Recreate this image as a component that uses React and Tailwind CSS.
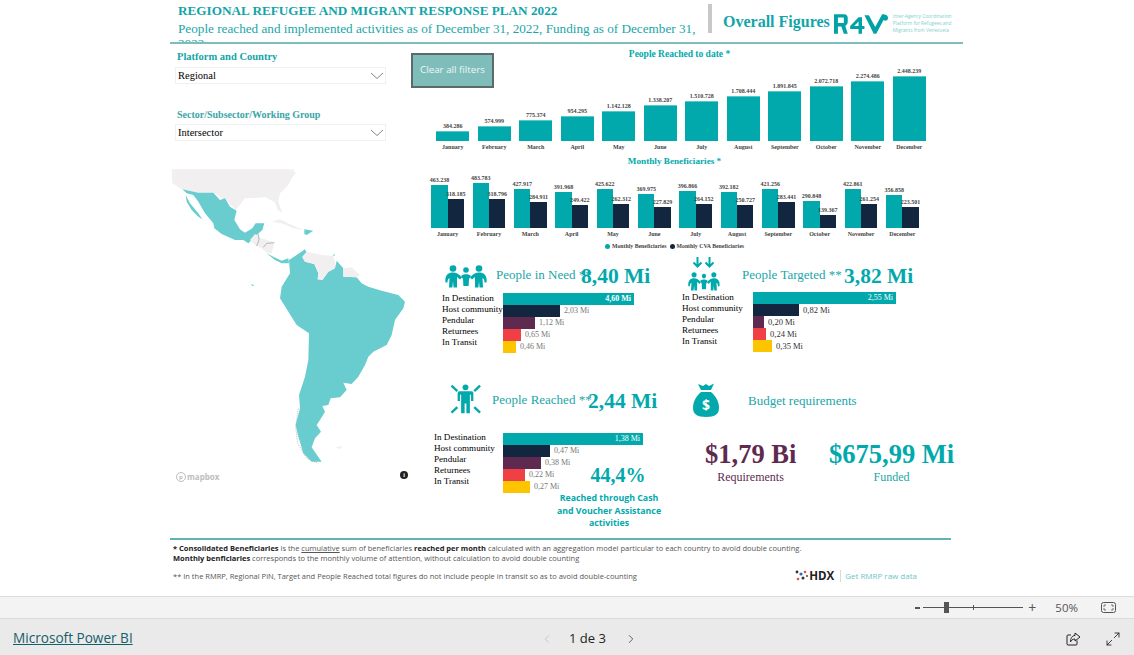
import { ChevronLeft, ChevronRight, Maximize2 } from 'lucide-react'

const serif = 'font-["Liberation_Serif",serif]'
const sans = 'font-["Open_Sans",sans-serif]'

const MONTHS = ['January', 'February', 'March', 'April', 'May', 'June', 'July', 'August', 'September', 'October', 'November', 'December']

const REACHED = [
  [384286, '384.286'], [574999, '574.999'], [775374, '775.374'], [954295, '954.295'],
  [1142128, '1.142.128'], [1338207, '1.338.207'], [1510728, '1.510.728'], [1708444, '1.708.444'],
  [1891845, '1.891.845'], [2072718, '2.072.718'], [2274486, '2.274.486'], [2448239, '2.448.239'],
]

const MONTHLY = [
  ['463.238', 463238, '318.185', 318185], ['483.783', 483783, '318.796', 318796],
  ['427.917', 427917, '284.911', 284911], ['391.968', 391968, '249.422', 249422],
  ['425.622', 425622, '262.312', 262312], ['369.975', 369975, '227.829', 227829],
  ['396.866', 396866, '264.152', 264152], ['392.182', 392182, '250.727', 250727],
  ['421.256', 421256, '283.441', 283441], ['290.848', 290848, '139.367', 139367],
  ['422.861', 422861, '261.254', 261254], ['356.858', 356858, '223.501', 223501],
]

const ROW_NAMES = ['In Destination', 'Host community', 'Pendular', 'Returnees', 'In Transit']
const ROW_COLORS = ['bg-[#01a9ac]', 'bg-[#12263f]', 'bg-[#5f2a50]', 'bg-[#f04045]', 'bg-[#fdc500]']

const NEED = [['4,60 Mi', 131], ['2,03 Mi', 57], ['1,12 Mi', 32], ['0,65 Mi', 18], ['0,46 Mi', 13]]
const TARGETED = [['2,55 Mi', 143], ['0,82 Mi', 46], ['0,20 Mi', 11], ['0,24 Mi', 13], ['0,35 Mi', 19]]
const PEOPLE_REACHED = [['1,38 Mi', 140], ['0,47 Mi', 47], ['0,38 Mi', 38], ['0,22 Mi', 22], ['0,27 Mi', 27]]

function Figure({ x, y, flip }) {
  return (
    <g transform={`translate(${x} ${y}) scale(${flip ? -1 : 1} 1)`}>
      <circle cx="0" cy="0" r="3.3" />
      <path d="M-7.5 14 C-8.5 7 -5 4 0 4 C3.5 4 6 5.5 9 9 L7 11 L4 8.5 L4 19 L0.6 19 L0 13 L-0.6 19 L-4 19 L-3.5 9.5 C-5 10 -5.5 12 -5.5 14 Z" />
    </g>
  )
}

function GroupFigures() {
  return (
    <>
      <Figure x={8} y={3.5} />
      <Figure x={34} y={3.5} flip />
      <g transform="translate(21 5)">
        <circle cx="0" cy="0" r="2.8" />
        <path d="M-5 6 C-3 3.5 3 3.5 5 6 L3 9 L2.6 16 L-2.6 16 L-3 9 Z" />
      </g>
    </>
  )
}

function PeopleIcon() {
  return (
    <svg viewBox="0 0 42 23" className="w-[42px] h-[23px]" fill="#01a9ac">
      <GroupFigures />
    </svg>
  )
}

function TargetIcon() {
  return (
    <svg viewBox="0 0 34 35" className="w-[34px] h-[35px]" fill="none">
      <path d="M10.5 1 V10 M6.5 6.5 L10.5 10.5 L14.5 6.5 M22.5 1 V10 M18.5 6.5 L22.5 10.5 L26.5 6.5" stroke="#01a9ac" strokeWidth="2" />
      <g fill="#01a9ac" transform="translate(1 16) scale(0.76 0.82)">
        <GroupFigures />
      </g>
    </svg>
  )
}

function ReachIcon() {
  return (
    <svg viewBox="60 18 120 110" className="w-[35px] h-[36px]" fill="#01a9ac">
      <circle cx="120" cy="33" r="10" />
      <path d="M99 46 H141 Q147 46 147 53 V80 H139 V58 H135 V122 H123 V88 H117 V122 H105 V58 H101 V80 H93 V53 Q93 46 99 46 Z" />
      <path d="M72 27 L92 46 M170 27 L150 46 M72 120 L92 101 M170 120 L150 101" stroke="#01a9ac" strokeWidth="8" />
    </svg>
  )
}

function BagIcon() {
  return (
    <svg viewBox="0 0 26 34" className="w-[26px] h-[34px]">
      <path d="M5 1 L10 3 L13 1 L16 3 L21 0.5 L18 7 H8 Z" fill="#01a9ac" />
      <path d="M8 9 H18 C24 14 26 20 26 25 C26 31 22 34 13 34 C4 34 0 31 0 25 C0 20 2 14 8 9 Z" fill="#01a9ac" />
      <text x="13" y="27" textAnchor="middle" fontSize="14" fontWeight="700" fill="#fff" fontFamily="Open Sans, sans-serif">$</text>
    </svg>
  )
}

function R4vLogo() {
  return (
    <svg viewBox="0 0 56 20" className="w-[55px] h-[20px]" fill="#01a2a6">
      <path d="M0 0 H10 Q14 0 14 4 V8 Q14 11 11.5 12 L14 20 H10 L7.5 12.5 H4 V20 H0 Z M4 3.5 V9 H10 V3.5 Z" fillRule="evenodd" />
      <path d="M25 3 H28.5 V12 H31 V15 H28.5 V20 H25 V15 H16.5 V12 Z M25 7.5 L20.5 12 H25 Z" fillRule="evenodd" />
      <path d="M31 1 H35.5 L42 13 L49 0 C52.5 0 55 1 55 4 C55 6.5 52.5 7.5 50.5 6 L43 20 H40.5 Z" />
    </svg>
  )
}

function Select({ value }) {
  return (
    <div className="ml-[5px] w-[211px] h-[17px] border border-[#f0f0f0] flex items-center justify-between pl-[2px] pr-[1px] text-[10.5px] text-black">
      <span>{value}</span>
      <svg viewBox="0 0 14 7" className="w-[14px] h-[7px]" fill="none" stroke="#666" strokeWidth="0.8">
        <path d="M1 1 L7 6.5 L13 1" />
      </svg>
    </div>
  )
}

function MapPanel() {
  return (
    <div className="relative mt-[19px] ml-[-5px] w-[260px] h-[330px]">
      <svg viewBox="0 0 780 990" className="w-[260px] h-[330px]">
        <path fill="#f1eff0" d="M20 28 L385 28 L392 40 L380 55 L370 75 L345 100 L340 125 L352 158 L338 150 L328 125 L300 112 L240 115 L212 150 L190 125 L170 115 L150 100 L100 98 L50 88 L22 70 Z" />
        <path fill="#f1eff0" d="M320 185 L345 178 L380 195 L415 210 L385 205 L350 190 Z M510 862 L532 858 L525 868 Z" />
        <path fill="#69cdd0" d="M52 88 L100 98 L145 98 L165 120 L180 115 L195 140 L215 152 L208 180 L225 208 L240 218 L262 205 L272 190 L298 190 L292 210 L275 225 L265 235 L250 250 L235 240 L210 240 L170 222 L148 205 L145 190 L120 160 L100 125 L85 105 L65 100 Z" />
        <path fill="#69cdd0" d="M62 105 L75 130 L100 160 L112 178 L100 170 L80 150 L65 125 Z M418 208 L445 212 L425 225 L418 222 Z M258 372 L268 376 L262 378 Z M502 285 L510 283 L508 288 Z" />
        <path fill="#f1eff0" d="M255 240 L270 222 L290 235 L328 248 L320 280 L305 278 L290 265 L270 255 Z" />
        <path fill="none" stroke="#999" strokeWidth="2" d="M280 222 L282 240 L275 258 M328 248 L305 250 L295 262" />
        <path fill="#69cdd0" d="M305 280 L325 290 L350 302 L370 295 L372 310 L350 310 L330 300 Z" />
        <path fill="#69cdd0" d="M372 300 L395 285 L420 268 L425 278 L412 292 L420 305 L448 312 L460 340 L458 358 L472 360 L490 335 L510 325 L515 302 L535 325 L535 350 L575 352 L590 370 L610 380 L650 392 L700 405 L720 425 L715 445 L690 480 L680 525 L665 555 L625 575 L610 590 L600 615 L580 650 L560 672 L535 668 L545 690 L525 712 L497 715 L490 735 L472 738 L480 755 L465 780 L455 795 L468 815 L450 835 L440 862 L470 905 L440 905 L415 880 L400 830 L392 795 L405 745 L402 705 L420 650 L430 600 L432 520 L395 495 L370 455 L345 415 L350 380 L375 340 Z" />
        <path fill="#f1eff0" d="M412 290 L425 275 L470 285 L505 288 L510 305 L510 325 L490 335 L472 360 L458 358 L460 340 L448 312 L420 305 Z M535 325 L560 322 L585 345 L575 352 L535 350 Z" />
        <path fill="none" stroke="#aaa" strokeWidth="2" strokeDasharray="4 3" d="M400 745 L392 800 L398 850 L425 895 L460 910" />
      </svg>
      <div className="absolute left-[11px] bottom-[8px] flex items-center gap-[1px] text-[#bdbdbd]">
        <span className={`${sans} w-[10px] h-[10px] rounded-full border border-[#bdbdbd] text-[6px] leading-[8px] text-center font-bold`}>p</span>
        <span className={`${sans} text-[8px] leading-none font-bold`}>mapbox</span>
      </div>
      <div className="absolute left-[235px] top-[311px] w-[8px] h-[8px] rounded-full bg-[#222] text-white text-[6px] leading-[8px] text-center font-bold">i</div>
    </div>
  )
}

function ReachedChart() {
  const max = REACHED[11][0]
  return (
    <div className="col-start-1 row-start-1 ml-[21px] w-[498px] pt-[1px]">
      <div className="text-center text-[9.5px] leading-[12px] font-bold text-[#01a9ac] pr-[3px]">People Reached to date *</div>
      <div className="grid grid-cols-12 h-[82px] mt-[-1px]">
        {REACHED.map(([n, label]) => (
          <div key={label} className="flex flex-col items-center justify-end">
            <span className="text-[6px] leading-[8px] font-bold text-[#444] whitespace-nowrap">{label}</span>
            <div className="w-[33px] mt-[1px] bg-[#01a9ac] border-t border-[#5cc7c9]" style={{ height: (n / max) * 65 }} />
          </div>
        ))}
      </div>
      <div className="grid grid-cols-12 mt-[3px]">
        {MONTHS.map((m) => (
          <span key={m} className="text-center text-[6px] leading-[7px] font-bold text-[#444]">{m}</span>
        ))}
      </div>
    </div>
  )
}

function MonthlyChart() {
  return (
    <div className="ml-[16px] w-[496px] mt-[4px]">
      <div className="text-center text-[9.2px] leading-[12px] font-bold text-[#01a9ac] pr-[1px]">Monthly Beneficiaries *</div>
      <div className="grid grid-cols-12 h-[61px]">
        {MONTHLY.map(([a, an, b, bn]) => (
          <div key={a} className="flex items-end justify-center">
            <div className="flex flex-col items-center w-[16.4px]">
              <span className="text-[6px] leading-[8px] font-bold text-[#444] whitespace-nowrap">{a}</span>
              <div className="w-full mt-[1px] bg-[#01a9ac]" style={{ height: (an / 463238) * 42.7 }} />
            </div>
            <div className="flex flex-col items-center w-[16.4px]">
              <span className="text-[6px] leading-[8px] font-bold text-[#444] whitespace-nowrap">{b}</span>
              <div className="w-full mt-[1px] bg-[#12263f]" style={{ height: (bn / 463238) * 42.7 }} />
            </div>
          </div>
        ))}
      </div>
      <div className="grid grid-cols-12 mt-[3px]">
        {MONTHS.map((m) => (
          <span key={m} className="text-center text-[6px] leading-[7px] font-bold text-[#444]">{m}</span>
        ))}
      </div>
      <div className="flex justify-center gap-[2px] items-center mt-[5px] pr-[1px] text-[5.8px] leading-[7px] font-bold text-[#444]">
        <span className="w-[5px] h-[5px] rounded-full bg-[#01a9ac]" />
        <span>Monthly Beneficiaries</span>
        <span className="w-[5px] h-[5px] rounded-full bg-[#12263f] ml-[1px]" />
        <span>Monthly CVA Beneficiaries</span>
      </div>
    </div>
  )
}

function Breakdown({ rows, labelClass, valueClass, firstInside }) {
  return (
    <div className="flex">
      <div className={`${labelClass} text-[9.1px] leading-[11px] text-black`}>
        {ROW_NAMES.map((n) => (
          <div key={n} className="whitespace-nowrap">{n}</div>
        ))}
      </div>
      <div>
        {rows.map(([label, w], i) => (
          <div key={label} className="flex items-center h-[12px]">
            <div className={`${ROW_COLORS[i]} h-full flex items-center justify-end pr-[3px]`} style={{ width: w }}>
              {i === 0 && <span className={`text-[8px] text-white whitespace-nowrap ${firstInside}`}>{label}</span>}
            </div>
            {i > 0 && <span className={`ml-[4px] whitespace-nowrap ${valueClass}`}>{label}</span>}
          </div>
        ))}
      </div>
    </div>
  )
}

function KpiHead({ label, value, labelClass, valueClass, pad, icon, h }) {
  return (
    <div className={`flex items-start ${pad} ${h}`}>
      {icon}
      <div className={`${labelClass} whitespace-nowrap text-[13px] leading-[19px] text-[#1aa6a8]`}>{label}</div>
      <div className={`${valueClass} text-[21.5px] leading-none font-bold text-[#01a9ac] whitespace-nowrap`}>{value}</div>
    </div>
  )
}

function Kpis() {
  return (
    <div className="grid grid-cols-[264px_288px]">
      <div className="h-[127px] pt-[13px]">
        <KpiHead label="People in Need **" value="8,40 Mi" pad="pl-[34px]" labelClass="ml-[9px] w-[85px] mt-[2px]" valueClass="mt-[3px]" h="h-[26px]"
          icon={<div className="mt-[2px]"><PeopleIcon /></div>} />
        <div className="mt-[4px]">
          <Breakdown rows={NEED} labelClass="pl-[31px] w-[92px]" valueClass="text-[8px] text-[#777]" firstInside="font-bold" />
        </div>
      </div>
      <div className="h-[127px] pt-[5px]">
        <KpiHead label="People Targeted **" value="3,82 Mi" pad="pl-[12px]" labelClass="ml-[21px] w-[102px] mt-[10px]" valueClass="mt-[11px]" h="h-[36px]"
          icon={<div className="mt-[1px]"><TargetIcon /></div>} />
        <div className="mt-[1px]">
          <Breakdown rows={TARGETED} labelClass="pl-[7px] w-[78px]" valueClass="text-[8.5px] text-[#333]" />
        </div>
      </div>
      <div className="pt-[4px]">
        <KpiHead label="People Reached **" value="2,44 Mi" pad="pl-[37px]" labelClass="ml-[9px] w-[96px] mt-[9px]" valueClass="mt-[10px]" h="h-[36px]" icon={<ReachIcon />} />
        <div className="mt-[16px]">
          <Breakdown rows={PEOPLE_REACHED} labelClass="pl-[23px] w-[92px] mt-[-1px]" valueClass="text-[8px] text-[#777]" />
        </div>
        <div className="ml-[145px] w-[106px] mt-[-30px] text-center">
          <div className="pl-[18px] text-[20px] leading-[24px] font-bold text-[#01a9ac]">44,4%</div>
          <div className={`${sans} mt-[5px] text-[8.8px] leading-[12.5px] font-bold text-[#01a9ac] whitespace-nowrap`}>
            Reached through Cash<br />and Voucher Assistance<br />activities
          </div>
        </div>
      </div>
      <div className="pt-[5px]">
        <div className="flex items-center pl-[18px] h-[35px]">
          <BagIcon />
          <div className="ml-[29px] mt-[2px] text-[13px] text-[#1aa6a8]">Budget requirements</div>
        </div>
        <div className="flex mt-[23px]">
          <div className="ml-[30px] w-[91px] text-center">
            <div className="text-[26.5px] leading-[28px] font-bold text-[#5f2a50] whitespace-nowrap">$1,79 Bi</div>
            <div className="mt-[2px] text-[12px] leading-[14px] text-[#5f2a50]">Requirements</div>
          </div>
          <div className="ml-[33px] w-[125px] text-center">
            <div className="text-[26.5px] leading-[28px] font-bold text-[#01a9ac] whitespace-nowrap">$675,99 Mi</div>
            <div className="mt-[2px] text-[12px] leading-[14px] text-[#1aa6a8]">Funded</div>
          </div>
        </div>
      </div>
    </div>
  )
}

function Footnotes() {
  return (
    <div className={`${sans} w-[781px] border-t-2 border-[#5fb5b3] pl-[3px] pt-[3px] text-[7.5px] leading-[10px] text-[#555]`}>
      <p>
        <b className="text-[#222]">* Consolidated Beneficiaries</b> is the <u>cumulative</u> sum of beneficiaries{' '}
        <b className="text-[#222]">reached per month</b> calculated with an aggregation model particular to each country to avoid double counting.
      </p>
      <p>
        <b className="text-[#222]">Monthly benficiaries</b> corresponds to the monthly volume of attention, without calculation to avoid double counting
      </p>
      <div className="flex items-center justify-between mt-[7px] pr-[34px]">
        <p>** In the RMRP, Regional PiN, Target and People Reached total figures do not include people in transit so as to avoid double-counting</p>
        <div className="flex items-center">
          <svg viewBox="0 0 13 12" className="w-[13px] h-[12px]">
            <circle cx="2" cy="2" r="1.4" fill="#333" />
            <circle cx="6" cy="4" r="1.6" fill="#2b6cb0" />
            <circle cx="10" cy="2" r="1.3" fill="#e0524d" />
            <circle cx="3" cy="9" r="1.3" fill="#e0524d" />
            <circle cx="8" cy="8" r="1.5" fill="#333" />
            <circle cx="12" cy="6" r="0.9" fill="#333" />
          </svg>
          <span className="ml-[1px] text-[11.5px] font-bold text-[#222]">HDX</span>
          <span className="ml-[6px] w-px h-[12px] bg-[#cde]" />
          <span className="ml-[4px] text-[8px] text-[#6cc5c6]">Get RMRP raw data</span>
        </div>
      </div>
    </div>
  )
}

function ReportPage() {
  return (
    <div className={`${serif} h-[596px] bg-white pl-[170px] overflow-hidden`}>
      <header className="flex w-[793px] h-[44px] border-b-2 border-[#7dbdbb]">
        <div className="w-[538px] pl-[8px] pt-[4px]">
          <div className="text-[13.2px] leading-[14px] font-bold text-[#12a5a8] whitespace-nowrap">REGIONAL REFUGEE AND MIGRANT RESPONSE PLAN 2022</div>
          <div className="h-[21px] overflow-hidden text-[13.2px] leading-[15px] text-[#1aa6a8] mt-[3px] w-[524px]">
            People reached and implemented activities as of December 31, 2022, Funding as of December 31, 2022
          </div>
        </div>
        <div className="w-[4px] h-[29px] mt-[4px] bg-[#c8c8c8]" />
        <div className="flex items-start pt-[13px]">
          <div className="ml-[11px] text-[16px] leading-[18px] font-bold text-[#12a5a8] whitespace-nowrap">Overall Figures</div>
          <div className="ml-[4px] mt-[1px]"><R4vLogo /></div>
          <div className={`${sans} ml-[4px] text-[4.8px] leading-[7px] text-[#7ecfd0] whitespace-nowrap`}>
            Inter-Agency Coordination<br />Platform for Refugees and<br />Migrants from Venezuela
          </div>
        </div>
      </header>

      <div className="flex h-[494px]">
        <aside className="w-[241px] pt-[7px]">
          <div className="pl-[7px] text-[10.5px] leading-[12px] font-bold text-[#12a5a8]">Platform and Country</div>
          <div className="mt-[4px]"><Select value="Regional" /></div>
          <div className="pl-[7px] mt-[25px] text-[10px] leading-[12px] font-bold text-[#3aa5a8]">Sector/Subsector/Working Group</div>
          <div className="mt-[3px]"><Select value="Intersector" /></div>
          <MapPanel />
        </aside>

        <section className="flex-1 pt-[3px]">
          <div className="grid">
            <ReachedChart />
            <button className={`${sans} col-start-1 row-start-1 self-start justify-self-start mt-[6px] w-[83px] h-[35px] bg-[#7fbdbb] border-2 border-[#5d6a6a] text-[9.8px] text-[#eef7f7]`}>
              Clear all filters
            </button>
          </div>
          <MonthlyChart />
          <Kpis />
        </section>
      </div>
      <Footnotes />
    </div>
  )
}

function ZoomBar() {
  return (
    <div className="h-[23px] bg-[#f3f3f3] border-y border-[#dcdcdc] flex items-center justify-end pr-[18px] text-[#555]">
      <span className="w-[5px] h-[2px] bg-[#555]" />
      <div className="relative ml-[3px] w-[100px] h-px bg-[#555]">
        <span className="absolute left-[21px] top-[-5px] w-[5px] h-[11px] bg-[#555]" />
        <span className="absolute left-[50px] top-[-2px] w-px h-[5px] bg-[#555]" />
      </div>
      <span className={`${sans} ml-[5px] text-[14px] leading-none`}>+</span>
      <span className={`${sans} ml-[19px] text-[11.5px]`}>50%</span>
      <svg viewBox="0 0 15 11" className="ml-[23px] w-[15px] h-[11px]" fill="none" stroke="#555">
        <rect x="0.5" y="0.5" width="14" height="10" rx="2" />
        <path d="M3 5 V3 H5 M10 3 H12 V5 M12 6 V8 H10 M5 8 H3 V6" strokeWidth="0.8" />
      </svg>
    </div>
  )
}

function BottomBar() {
  return (
    <div className={`${sans} flex-1 bg-[#eaeaea] flex items-center pt-[3px] pl-[13px] pr-[13px] relative`}>
      <a className="text-[13.6px] underline text-[#14606a]">Microsoft Power BI</a>
      <div className="absolute left-[540px] flex items-center text-[13px] font-medium text-[#222]">
        <ChevronLeft size={14} strokeWidth={1.2} className="text-[#bbb]" />
        <span className="ml-[15px]">1 de 3</span>
        <ChevronRight size={14} strokeWidth={1.4} className="ml-[18px] text-[#444]" />
      </div>
      <div className="ml-auto flex items-center gap-[24px]">
        <svg viewBox="0 0 15 14" className="w-[15px] h-[14px]" fill="none" stroke="#222" strokeWidth="1">
          <path d="M11 8.5 V12 Q11 13 10 13 H2 Q1 13 1 12 V4 Q1 3 2 3 H5" />
          <path d="M9 1 L14 5 L9 9 V7 C6.5 7 5 8.5 4.5 10 C4.5 6.5 6 3.5 9 3.5 Z" />
        </svg>
        <Maximize2 size={16} strokeWidth={1.2} className="text-[#111]" />
      </div>
    </div>
  )
}

export default function App() {
  return (
    <div className="w-[1134px] h-[655px] flex flex-col overflow-hidden bg-white">
      <ReportPage />
      <ZoomBar />
      <BottomBar />
    </div>
  )
}
